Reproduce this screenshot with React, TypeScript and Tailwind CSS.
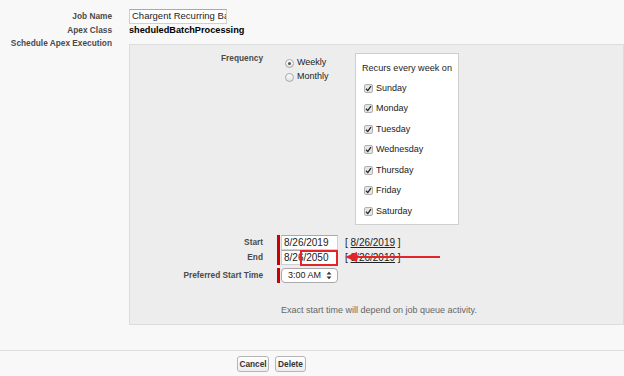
import { type ReactNode } from 'react'

const days = ['Sunday', 'Monday', 'Tuesday', 'Wednesday', 'Thursday', 'Friday', 'Saturday']

function Label({ children, className = '' }: { children: ReactNode; className?: string }) {
  return (
    <div className={`shrink-0 whitespace-nowrap text-right text-[8.3px] font-bold text-[#4a4a4a] ${className}`}>
      {children}
    </div>
  )
}

function Radio({ checked }: { checked?: boolean }) {
  return (
    <span className="flex h-[9px] w-[9px] items-center justify-center rounded-full border border-[#a8a8a8] bg-gradient-to-b from-[#fdfdfd] to-[#e4e4e4]">
      {checked && <span className="h-[3px] w-[3px] rounded-full bg-[#555]" />}
    </span>
  )
}

function Check() {
  return (
    <span className="flex h-[9px] w-[9px] items-center justify-center rounded-[2px] border border-[#b0b0b0] bg-[#e6e6e6]">
      <svg width="7" height="7" viewBox="0 0 7 7">
        <path d="M1 3.8 L2.8 5.6 L6 1.2" fill="none" stroke="#222" strokeWidth="1.3" />
      </svg>
    </span>
  )
}

function DateInput({ value }: { value: string }) {
  return (
    <div className="flex items-center">
      <span className="h-[15px] w-[3px] bg-[#c00]" />
      <div className="ml-[1px] flex h-[15px] w-[57px] items-center border border-[#d0d0d0] border-t-[#a9a9a9] bg-white pl-[2px] text-[10px] text-[#222]">
        {value}
      </div>
    </div>
  )
}

export default function App() {
  return (
    <div
      className="relative h-[376px] w-[624px] overflow-hidden bg-[#f8f8f8] text-[#222]"
      style={{ fontFamily: '"Liberation Sans", Arial, Helvetica, sans-serif' }}
    >
      <div className="pt-[8px]">
        <div className="flex h-[16px] items-center">
          <Label className="w-[112px]">Job Name</Label>
          <div className="ml-[17px] flex h-[15px] w-[98px] items-center overflow-hidden whitespace-nowrap border border-[#d0d0d0] border-t-[#a9a9a9] bg-white pl-[2px] text-[9.5px]">
            Chargent Recurring Batch
          </div>
        </div>
        <div className="flex h-[13px] items-center">
          <Label className="w-[112px]">Apex Class</Label>
          <div className="ml-[17px] text-[9.2px] font-bold text-black">sheduledBatchProcessing</div>
        </div>
        <div className="flex items-start">
          <Label className="w-[112px] leading-[13px]">Schedule Apex Execution</Label>
          <div className="ml-[17px] mt-[7px] h-[281px] flex-1 border border-[#dcdcdc] bg-[#ededed] pt-[8px]">
            <div className="flex items-start">
              <Label className="-mt-[1px] w-[133px] leading-[12px]">Frequency</Label>
              <div className="ml-[22px] mt-[3px] w-[70px] text-[9px]">
                <div className="flex h-[14px] items-center gap-[3px]">
                  <Radio checked />
                  <span>Weekly</span>
                </div>
                <div className="flex h-[14px] items-center gap-[3px]">
                  <Radio />
                  <span>Monthly</span>
                </div>
              </div>
              <div className="h-[172px] w-[104px] border border-[#cfcfcf] bg-white pt-[8px] text-[9px]">
                <div className="whitespace-nowrap pl-[6px] text-[9.1px] leading-[12px]">Recurs every week on</div>
                <div className="mt-[4px]">
                  {days.map((d) => (
                    <div key={d} className="flex h-[20.5px] items-center gap-[3px] pl-[8px]">
                      <Check />
                      <span>{d}</span>
                    </div>
                  ))}
                </div>
              </div>
            </div>

            <div className="mt-[10px] flex h-[15px] items-center">
              <Label className="w-[133px]">Start</Label>
              <div className="ml-[14px]">
                <DateInput value="8/26/2019" />
              </div>
              <span className="ml-[7px] text-[10px]">
                [ <span className="underline">8/26/2019</span> ]
              </span>
            </div>
            <div className="flex h-[15px] items-center">
              <Label className="w-[133px]">End</Label>
              <div className="ml-[14px]">
                <DateInput value="8/26/2050" />
              </div>
              <span className="ml-[7px] text-[10px]">
                [ <span className="underline">8/26/2019</span> ]
              </span>
            </div>
            <div className="mt-[3px] flex h-[15px] items-center">
              <Label className="w-[133px]">Preferred Start Time</Label>
              <div className="ml-[14px] flex items-center">
                <span className="h-[15px] w-[3px] bg-[#c00]" />
                <div className="ml-[1px] flex h-[15px] w-[57px] items-center justify-between rounded-[4px] border border-[#a9a9a9] bg-white pl-[6px] pr-[5px] text-[9px]">
                  <span>3:00 AM</span>
                  <svg width="6" height="9" viewBox="0 0 6 9">
                    <path d="M0.5 3.5 L3 0.8 L5.5 3.5 Z M0.5 5.5 L3 8.2 L5.5 5.5 Z" fill="#333" />
                  </svg>
                </div>
              </div>
            </div>

            <div className="ml-[151px] mt-[21px] text-[9px] leading-[12px] text-[#666]">
              Exact start time will depend on job queue activity.
            </div>
          </div>
        </div>
      </div>

      <div className="mt-[25px] border-t border-[#dddddd] pt-[5px]">
        <div className="ml-[237px] flex gap-[6px]">
          <button className="h-[16px] w-[32px] rounded-[3px] border border-[#b5b5b5] bg-gradient-to-b from-white to-[#ececec] text-[8.3px] font-bold text-[#333]">
            Cancel
          </button>
          <button className="h-[16px] w-[31px] rounded-[3px] border border-[#b5b5b5] bg-gradient-to-b from-white to-[#ececec] text-[8.3px] font-bold text-[#333]">
            Delete
          </button>
        </div>
      </div>

      {/* annotation overlay */}
      <div className="absolute left-[300px] top-[250px] h-[16px] w-[38px] border-2 border-[#e3242b]" />
      <svg className="absolute left-[343px] top-[250px]" width="100" height="14" viewBox="0 0 100 14">
        <path d="M12 7 L97 7" stroke="#e3242b" strokeWidth="2" />
        <path d="M2 7 L14 2 L14 12 Z" fill="#e3242b" />
      </svg>
    </div>
  )
}
